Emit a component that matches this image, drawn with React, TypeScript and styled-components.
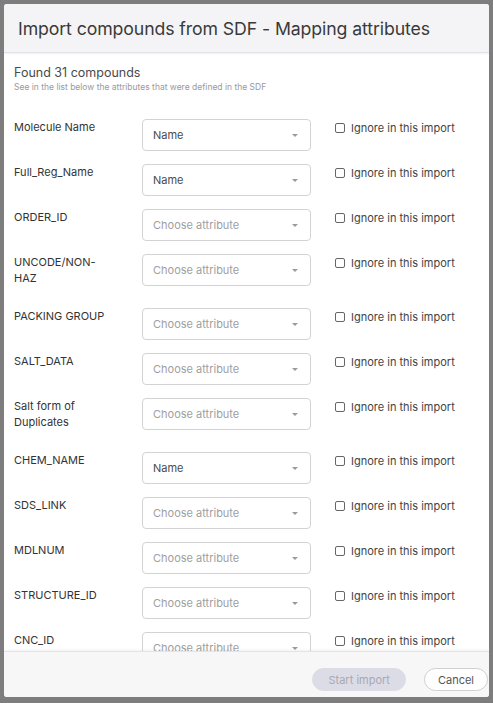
import React from 'react';
import styled, { createGlobalStyle } from 'styled-components';

const GlobalStyle = createGlobalStyle`
  html, body {
    margin: 0;
    padding: 0;
    background: #7d7d7d;
  }
  body {
    font-family: Inter, "Open Sans", "Liberation Sans", sans-serif;
  }
`;

const Page = styled.div`
  box-sizing: border-box;
  width: 493px;
  height: 703px;
  padding: 4px 4px 6px 4px;
  background: #7d7d7d;
`;

const Dialog = styled.div`
  display: flex;
  flex-direction: column;
  width: 485px;
  height: 693px;
  background: #fff;
  border-radius: 3px;
  overflow: hidden;
`;

const Header = styled.div`
  flex: 0 0 48px;
  display: flex;
  align-items: center;
  padding: 0 14px;
  background: #f4f4f6;
  border-bottom: 1px solid #e2e2e6;
  box-shadow: 0 1px 2px rgba(0, 0, 0, 0.06);
`;

const Title = styled.h1`
  margin: 0;
  font-size: 17.7px;
  font-weight: 400;
  color: #3a3a3a;
  letter-spacing: -0.1px;
`;

const Body = styled.div`
  flex: 1;
  overflow: hidden;
  padding: 12px 10px 0 10px;
`;

const Found = styled.div`
  font-size: 12.5px;
  color: #4a4a4a;
  line-height: 16px;
`;

const Hint = styled.div`
  font-size: 8.5px;
  color: #9a9a9a;
  line-height: 12px;
  margin-bottom: 26px;
`;

const Row = styled.div`
  display: grid;
  grid-template-columns: 128px 169px 1fr;
  align-items: start;
  margin-bottom: 13px;
`;

const Label = styled.div`
  font-size: 11px;
  line-height: 15.5px;
  color: #333;
  padding: 1px 10px 9px 0;
`;

const Select = styled.div<{ $placeholder?: boolean }>`
  box-sizing: border-box;
  height: 32px;
  display: flex;
  align-items: center;
  justify-content: space-between;
  padding: 0 10px;
  border: 1px solid #d3d3d6;
  border-radius: 4px;
  font-size: 11px;
  color: ${(p) => (p.$placeholder ? '#a0a0a0' : '#4a4a4a')};
`;

const Caret = styled.span`
  width: 0;
  height: 0;
  border-left: 3px solid transparent;
  border-right: 3px solid transparent;
  border-top: 3px solid #9a9a9a;
  margin-right: 2px;
`;

const Ignore = styled.label`
  display: flex;
  align-items: center;
  gap: 6px;
  margin-left: 24px;
  padding-top: 2px;
  font-size: 11px;
  line-height: 14px;
  color: #444;
`;

const Box = styled.span`
  box-sizing: border-box;
  width: 10px;
  height: 10px;
  border: 1px solid #666;
  border-radius: 2px;
  background: #fff;
`;

const Footer = styled.div`
  flex: 0 0 46px;
  display: flex;
  align-items: flex-start;
  justify-content: flex-end;
  gap: 18px;
  padding: 16px 1px 0 0;
  box-sizing: border-box;
  background: #f7f7f8;
  border-top: 1px solid #e4e4e8;
  box-shadow: 0 -1px 3px rgba(0, 0, 0, 0.06);
`;

const Button = styled.button<{ $primary?: boolean }>`
  box-sizing: border-box;
  height: 23px;
  padding: 0 ${(p) => (p.$primary ? '15px' : '13px')};
  border-radius: 12px;
  font-family: inherit;
  font-size: 11px;
  border: 1px solid ${(p) => (p.$primary ? '#dcdce6' : '#cfcfd4')};
  background: ${(p) => (p.$primary ? '#dcdce6' : '#fff')};
  color: ${(p) => (p.$primary ? '#a8a8b6' : '#555')};
`;

const rows: { name: string; value?: string }[] = [
  { name: 'Molecule Name', value: 'Name' },
  { name: 'Full_Reg_Name', value: 'Name' },
  { name: 'ORDER_ID' },
  { name: 'UNCODE/NON-HAZ' },
  { name: 'PACKING GROUP' },
  { name: 'SALT_DATA' },
  { name: 'Salt form of Duplicates' },
  { name: 'CHEM_NAME', value: 'Name' },
  { name: 'SDS_LINK' },
  { name: 'MDLNUM' },
  { name: 'STRUCTURE_ID' },
  { name: 'CNC_ID' },
  { name: 'CAS_NUMBER' },
];

export default function App() {
  return (
    <Page>
      <GlobalStyle />
      <Dialog>
        <Header>
          <Title>Import compounds from SDF - Mapping attributes</Title>
        </Header>
        <Body>
          <Found>Found 31 compounds</Found>
          <Hint>See in the list below the attributes that were defined in the SDF</Hint>
          {rows.map((r) => (
            <Row key={r.name}>
              <Label>{r.name === 'UNCODE/NON-HAZ' ? <>UNCODE/NON-<br />HAZ</> : r.name}</Label>
              <Select $placeholder={!r.value}>
                {r.value || 'Choose attribute'}
                <Caret />
              </Select>
              <Ignore>
                <Box />
                Ignore in this import
              </Ignore>
            </Row>
          ))}
        </Body>
        <Footer>
          <Button $primary>Start import</Button>
          <Button>Cancel</Button>
        </Footer>
      </Dialog>
    </Page>
  );
}
